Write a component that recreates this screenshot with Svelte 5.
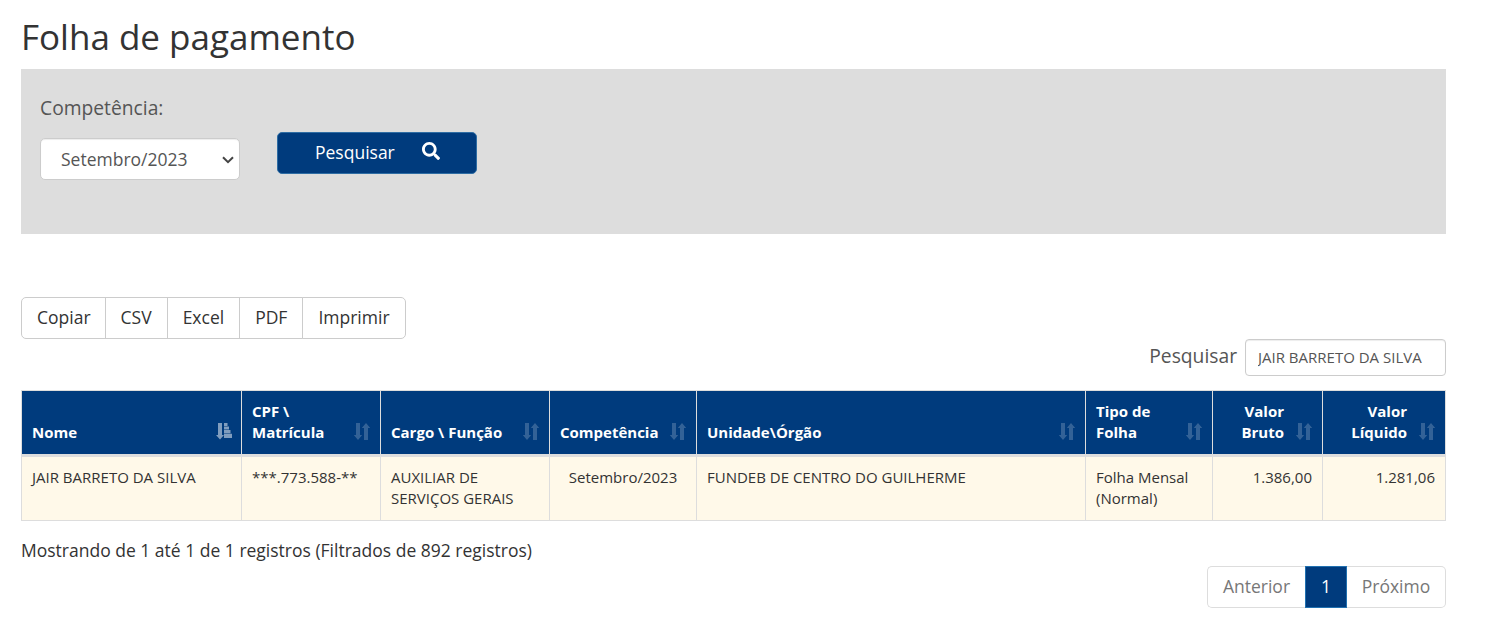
<script>
  const exports = ['Copiar', 'CSV', 'Excel', 'PDF', 'Imprimir'];

  const columns = [
    { key: 'nome', label: 'Nome', width: 220 },
    { key: 'cpf', label: 'CPF \\ Matrícula', width: 139 },
    { key: 'cargo', label: 'Cargo \\ Função', width: 169 },
    { key: 'competencia', label: 'Competência', width: 147, align: 'center' },
    { key: 'unidade', label: 'Unidade\\Órgão', width: 389 },
    { key: 'tipo', label: 'Tipo de Folha', width: 127 },
    { key: 'bruto', label: 'Valor Bruto', width: 110, align: 'right' },
    { key: 'liquido', label: 'Valor Líquido', width: 123, align: 'right' },
  ];

  const rows = [
    {
      nome: 'JAIR BARRETO DA SILVA',
      cpf: '***.773.588-**',
      cargo: 'AUXILIAR DE SERVIÇOS GERAIS',
      competencia: 'Setembro/2023',
      unidade: 'FUNDEB DE CENTRO DO GUILHERME',
      tipo: 'Folha Mensal (Normal)',
      bruto: '1.386,00',
      liquido: '1.281,06',
    },
  ];

  let sortKey = $state('nome');
  let search = $state('JAIR BARRETO DA SILVA');
  let competencia = $state('Setembro/2023');
</script>

<main class="page">
  <h1>Folha de pagamento</h1>

  <form class="filter" onsubmit={(e) => e.preventDefault()}>
    <div class="field">
      <label for="competencia">Competência:</label>
      <div class="select-wrap">
        <select id="competencia" bind:value={competencia}>
          <option>Setembro/2023</option>
        </select>
        <svg class="caret" viewBox="0 0 12 8" width="12" height="8">
          <path d="M1 1.2 6 6.2 11 1.2" fill="none" stroke="#444" stroke-width="2" />
        </svg>
      </div>
    </div>
    <button class="btn-search" type="submit">
      <span>Pesquisar</span>
      <svg viewBox="0 0 512 512" width="18" height="18">
        <path fill="#fff" d="M505 442.7 405.3 343c-4.500-4.500-10.600-7-17-7H372c27.600-35.300 44-79.700 44-128C416 93.100 322.900 0 208 0S0 93.100 0 208s93.100 208 208 208c48.300 0 92.700-16.400 128-44v16.300c0 6.400 2.500 12.500 7 17l99.700 99.700c9.400 9.400 24.600 9.400 33.900 0l28.300-28.300c9.400-9.400 9.400-24.600.1-34zM208 336c-70.700 0-128-57.200-128-128 0-70.700 57.200-128 128-128 70.700 0 128 57.200 128 128 0 70.700-57.200 128-128 128z" />
      </svg>
    </button>
  </form>

  <div class="btn-group">
    {#each exports as label}
      <button>{label}</button>
    {/each}
  </div>

  <div class="table-filter">
    <label for="search">Pesquisar</label>
    <input id="search" type="text" bind:value={search} />
  </div>

  <table>
    <colgroup>
      {#each columns as col}
        <col style="width: {col.width}px" />
      {/each}
    </colgroup>
    <thead>
      <tr>
        {#each columns as col}
          <th class={col.align} onclick={() => (sortKey = col.key)}>
            {col.label}
            {#if sortKey === col.key}
              <svg class="sort active" viewBox="0 0 16 17" width="16" height="17">
                <path d="M2 0h4v12h2l-4 4.500L0 12h2zM8 0h3.500v3H8zM8 3.500h5v3H8zM8 7h6.500v3.200H8zM8 10.700h8V15H8z" />
              </svg>
            {:else}
              <svg class="sort" viewBox="0 0 16 17" width="16" height="17">
                <path d="M2 0h4v12h2.200L4 17-.2 12H2zM12 0l4.200 5H14v12h-4V5H7.800z" />
              </svg>
            {/if}
          </th>
        {/each}
      </tr>
    </thead>
    <tbody>
      {#each rows as row}
        <tr>
          {#each columns as col}
            <td class={col.align}>{row[col.key]}</td>
          {/each}
        </tr>
      {/each}
    </tbody>
  </table>

  <div class="info">Mostrando de 1 até 1 de 1 registros (Filtrados de 892 registros)</div>

  <nav class="pagination">
    <span class="prev">Anterior</span>
    <span class="current">1</span>
    <span class="next">Próximo</span>
  </nav>
</main>

<style>
  :global(body) {
    background: #fff;
  }

  .page {
    box-sizing: border-box;
    width: 1446px;
    padding: 17px 0 0 21px;
    font-family: 'Open Sans', sans-serif;
    font-size: 17.5px;
    color: #333;
  }

  .page * {
    box-sizing: border-box;
  }

  h1 {
    margin: 0 0 12px;
    height: 40px;
    line-height: 40px;
    font-size: 35px;
    font-weight: 400;
  }

  button,
  select,
  input {
    font: inherit;
  }

  .filter {
    display: flex;
    gap: 37px;
    height: 165px;
    padding: 25px 19px;
    background: #ddd;
  }

  .field label {
    display: block;
    height: 44px;
    line-height: 28px;
    font-size: 19.25px;
    color: #555;
  }

  .select-wrap {
    position: relative;
    width: 200px;
  }

  select {
    display: block;
    width: 200px;
    height: 42px;
    padding: 0 20px;
    appearance: none;
    border: 1px solid #ccc;
    border-radius: 5px;
    background: #fff;
    box-shadow: inset 0 1px 1px rgba(0, 0, 0, 0.075);
    color: #555;
  }

  .caret {
    position: absolute;
    right: 6px;
    top: 18px;
    pointer-events: none;
  }

  .btn-search {
    display: flex;
    align-items: center;
    gap: 27px;
    width: 200px;
    height: 42px;
    margin-top: 38px;
    padding: 0 0 2px 37px;
    border: 1px solid #2e6da4;
    border-radius: 5px;
    background: #003b7d;
    color: #fff;
  }

  .btn-search svg {
    margin-bottom: 2px;
  }

  .btn-group {
    display: flex;
    margin-top: 63px;
  }

  .btn-group button {
    height: 42px;
    margin: 0 0 0 -1px;
    padding: 0 15px 2px;
    border: 1px solid #ccc;
    background: #fff;
    color: #333;
  }

  .btn-group button:first-child {
    margin-left: 0;
    padding-right: 14px;
    border-radius: 5px 0 0 5px;
  }

  .btn-group button:last-child {
    border-radius: 0 5px 5px 0;
  }

  .table-filter {
    display: flex;
    justify-content: flex-end;
    gap: 8px;
    height: 51px;
  }

  .table-filter label {
    line-height: 34px;
    font-size: 19.25px;
    color: #555;
  }

  .table-filter input {
    width: 201px;
    height: 37px;
    padding: 0 12px 2px;
    border: 1px solid #ccc;
    border-radius: 4px;
    box-shadow: inset 0 1px 1px rgba(0, 0, 0, 0.075);
    font-size: 15px;
    color: #555;
  }

  table {
    width: 1425px;
    table-layout: fixed;
    border-collapse: separate;
    border-spacing: 0;
    border-top: 1px solid #ddd;
    border-left: 1px solid #ddd;
    font-size: 15px;
    line-height: 21px;
  }

  th,
  td {
    padding: 10px;
    border-right: 1px solid #ddd;
    text-align: left;
  }

  th {
    position: relative;
    height: 66px;
    padding: 10px 38px 11px 10px;
    border-bottom: 3px solid #ddd;
    background: #003b7d;
    color: #fff;
    vertical-align: bottom;
    cursor: pointer;
  }

  td {
    height: 64px;
    border-bottom: 1px solid #ddd;
    background: #fff9e9;
    vertical-align: top;
  }

  .center {
    text-align: center;
  }

  .right {
    text-align: right;
  }

  .sort {
    position: absolute;
    right: 10px;
    bottom: 14px;
    fill: #fff;
    opacity: 0.2;
  }

  .sort.active {
    right: 9px;
    opacity: 0.5;
  }

  .info {
    height: 45px;
    line-height: 26px;
    padding-top: 16px;
  }

  .pagination {
    display: flex;
    justify-content: flex-end;
    line-height: 39px;
    color: #777;
  }

  .pagination span {
    height: 42px;
    border: 1px solid #ddd;
    text-align: center;
  }

  .pagination .prev {
    width: 98px;
    border-right: 0;
    border-radius: 5px 0 0 5px;
  }

  .pagination .current {
    width: 42px;
    border-color: #2071b1;
    background: #003b7d;
    color: #fff;
  }

  .pagination .next {
    width: 99px;
    border-left: 0;
    border-radius: 0 5px 5px 0;
  }
</style>
